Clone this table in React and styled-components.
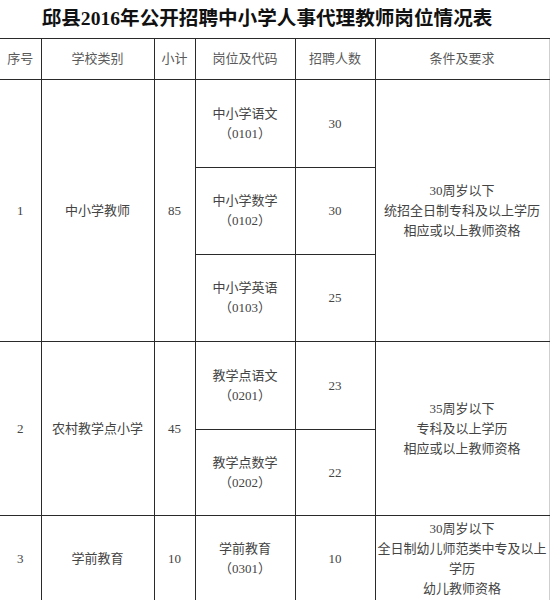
import React from 'react'
import styled, { createGlobalStyle } from 'styled-components'

const GlobalStyle = createGlobalStyle`
    html, body {
        margin: 0;
        padding: 0;
        background: #ffffff;
    }
`

const Page = styled.div`
    width: 550px;
    height: 600px;
    overflow: hidden;
    background: #fff;
    font-family: "Liberation Serif", "Noto Sans CJK SC", serif;
`

const Title = styled.h1`
    box-sizing: border-box;
    margin: 0;
    height: 38px;
    padding: 0 16px 5px 0;
    display: flex;
    align-items: center;
    justify-content: center;
    font-size: 19.6px;
    font-weight: bold;
    color: #111;
`

const Table = styled.table`
    width: 549px;
    table-layout: fixed;
    border-collapse: collapse;
    border-top: 1px solid #2a2a2a;
    border-right: 1px solid #cfcfcf;
`

const Cell = styled.td`
    border: 1px solid #2a2a2a;
    border-left: ${(p) => (p.$first ? 'none' : '1px solid #2a2a2a')};
    border-right: ${(p) => (p.$last ? 'none' : '1px solid #2a2a2a')};
    padding: 0;
    text-align: center;
    vertical-align: middle;
    font-size: 13px;
    line-height: 20px;
    color: #444;
`

const HeadCell = styled(Cell).attrs({ as: 'th' })`
    font-weight: normal;
    color: #5a5a5a;
`

const Row = styled.tr`
    height: ${(p) => p.$h}px;
`

const Line = styled.div``

const columns = [41, 113, 41, 100, 80, 174]

const groups = [
    {
        no: '1',
        type: '中小学教师',
        total: '85',
        posts: [
            { name: '中小学语文', code: '（0101）', count: '30', h: 88 },
            { name: '中小学数学', code: '（0102）', count: '30', h: 87 },
            { name: '中小学英语', code: '（0103）', count: '25', h: 87 },
        ],
        reqs: ['30周岁以下', '统招全日制专科及以上学历', '相应或以上教师资格'],
    },
    {
        no: '2',
        type: '农村教学点小学',
        total: '45',
        posts: [
            { name: '教学点语文', code: '（0201）', count: '23', h: 88 },
            { name: '教学点数学', code: '（0202）', count: '22', h: 86 },
        ],
        reqs: ['35周岁以下', '专科及以上学历', '相应或以上教师资格'],
    },
    {
        no: '3',
        type: '学前教育',
        total: '10',
        posts: [
            { name: '学前教育', code: '（0301）', count: '10', h: 86 },
        ],
        reqs: ['30周岁以下', '全日制幼儿师范类中专及以上学历', '幼儿教师资格'],
    },
]

const App = () => {
    return (
        <Page>
            <GlobalStyle />
            <Title>邱县2016年公开招聘中小学人事代理教师岗位情况表</Title>
            <Table>
                <colgroup>
                    {columns.map((w, i) => (
                        <col key={i} style={{ width: w }} />
                    ))}
                </colgroup>
                <thead>
                    <Row $h={41}>
                        <HeadCell $first>序号</HeadCell>
                        <HeadCell>学校类别</HeadCell>
                        <HeadCell>小计</HeadCell>
                        <HeadCell>岗位及代码</HeadCell>
                        <HeadCell>招聘人数</HeadCell>
                        <HeadCell $last>条件及要求</HeadCell>
                    </Row>
                </thead>
                <tbody>
                    {groups.map((g) =>
                        g.posts.map((p, i) => (
                            <Row key={g.no + i} $h={p.h}>
                                {i === 0 && (
                                    <>
                                        <Cell $first rowSpan={g.posts.length}>{g.no}</Cell>
                                        <Cell rowSpan={g.posts.length}>{g.type}</Cell>
                                        <Cell rowSpan={g.posts.length}>{g.total}</Cell>
                                    </>
                                )}
                                <Cell>
                                    <Line>{p.name}</Line>
                                    <Line>{p.code}</Line>
                                </Cell>
                                <Cell>{p.count}</Cell>
                                {i === 0 && (
                                    <Cell $last rowSpan={g.posts.length}>
                                        {g.reqs.map((r) => (
                                            <Line key={r}>{r}</Line>
                                        ))}
                                    </Cell>
                                )}
                            </Row>
                        ))
                    )}
                </tbody>
            </Table>
        </Page>
    )
}

export default App
